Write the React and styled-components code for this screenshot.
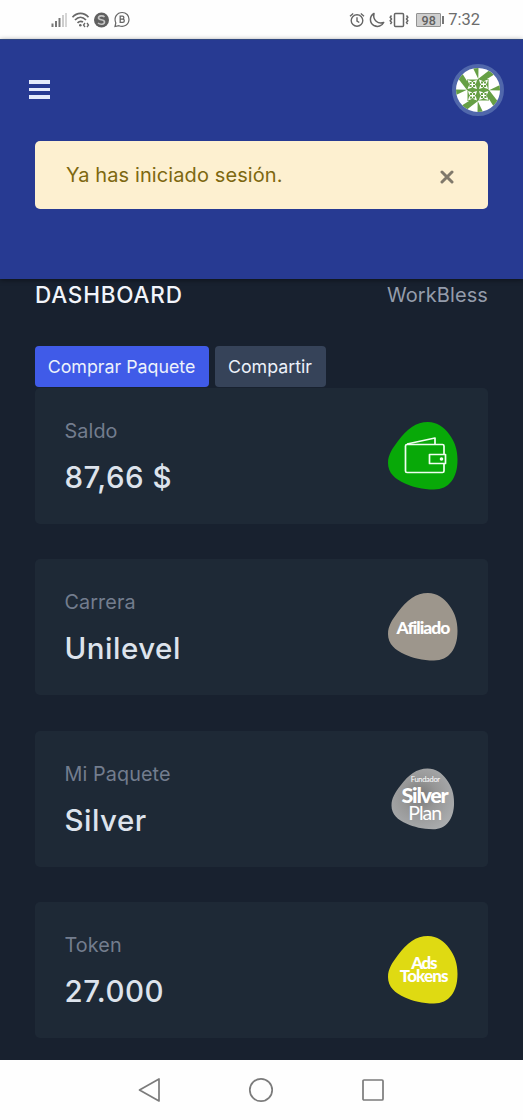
import React from "react";
import styled, { createGlobalStyle } from "styled-components";

const GlobalStyle = createGlobalStyle`
  * {
    box-sizing: border-box;
  }
  body {
    margin: 0;
    background-color: #18212f;
    font-family: Inter, "Liberation Sans", sans-serif;
  }
`;

const Screen = styled.div`
  display: flex;
  flex-direction: column;
  width: 523px;
  height: 1120px;
  overflow: hidden;
  background-color: #18212f;
`;

const StatusBar = styled.div`
  display: flex;
  flex-shrink: 0;
  justify-content: space-between;
  align-items: center;
  height: 39px;
  padding: 0 43px 0 50px;
  background-color: #fefefe;
`;

const StatusGroup = styled.div`
  display: flex;
  align-items: center;
  gap: ${props => props.gap};
`;

const Clock = styled.span`
  font-family: Roboto, sans-serif;
  font-size: 16.5px;
  line-height: 20px;
  color: #6c6c6c;
`;

const Battery = styled.span`
  display: flex;
  align-items: center;
  gap: 1px;
  margin-left: 3px;
  &::after {
    content: "";
    width: 2px;
    height: 8px;
    background-color: #777;
  }
`;

const BatteryLevel = styled.span`
  width: 25px;
  height: 14px;
  border: 1px solid #929292;
  border-radius: 1px;
  background-color: #cfcfcf;
  font-family: Roboto, sans-serif;
  font-size: 12.5px;
  font-weight: 500;
  line-height: 13px;
  text-align: center;
  color: #606060;
`;

const Header = styled.header`
  flex-shrink: 0;
  height: 240px;
  background-color: #273a92;
  border-top: 1px solid #2f477f;
  box-shadow: 0 1px 5px rgba(0, 0, 0, 0.45);
`;

const TopBar = styled.div`
  display: flex;
  justify-content: space-between;
  align-items: center;
  height: 101px;
  padding: 0 19px 2px 29px;
`;

const MenuButton = styled.button`
  display: flex;
  flex-direction: column;
  gap: 4px;
  width: 21px;
  padding: 0;
  border: none;
  background: none;
`;

const MenuLine = styled.span`
  height: 3.5px;
  background-color: #e4eafb;
`;

const Avatar = styled.div`
  width: 52px;
  height: 52px;
  border: 4px solid #5067ab;
  border-radius: 50%;
  overflow: hidden;
  background-color: #fff;
`;

const Alert = styled.div`
  display: flex;
  justify-content: space-between;
  align-items: center;
  height: 68px;
  margin: 0 35px;
  padding: 0 34px 0 31px;
  border-radius: 5px;
  background-color: #fdf0d0;
`;

const AlertText = styled.span`
  font-size: 20px;
  letter-spacing: 0.1px;
  color: #7d6810;
`;

const CloseIcon = styled.svg`
  margin-top: 4px;
`;

const Main = styled.main`
  flex: 1;
  min-height: 0;
  padding: 0 35px;
`;

const TitleRow = styled.div`
  display: flex;
  justify-content: space-between;
  align-items: center;
  height: 32px;
  margin-bottom: 35px;
`;

const Title = styled.h1`
  margin: 0;
  font-size: 22.5px;
  font-weight: 550;
  line-height: 30px;
  letter-spacing: 0.8px;
  color: #f2f5fb;
`;

const Brand = styled.span`
  font-size: 20px;
  letter-spacing: 0.1px;
  color: #949cab;
`;

const Actions = styled.div`
  display: flex;
  gap: 6px;
  margin-bottom: 1px;
`;

const Button = styled.button`
  width: ${props => props.width};
  height: 41px;
  padding: 0 1px 1px 0;
  border: none;
  border-radius: 4px;
  background-color: ${props => (props.$primary ? "#405be8" : "#364359")};
  font-family: inherit;
  font-size: 17.8px;
  color: #edf2fb;
`;

const Cards = styled.div`
  display: flex;
  flex-direction: column;
  gap: 35.4px;
`;

const Card = styled.section`
  display: flex;
  justify-content: space-between;
  align-items: center;
  height: 136px;
  padding: 0 30px 0 29.5px;
  border-radius: 5px;
  background-color: #1e2936;
`;

const Label = styled.p`
  margin: 0 0 14px;
  font-size: 19.8px;
  line-height: 28px;
  letter-spacing: 0.1px;
  color: #737d8e;
`;

const Value = styled.p`
  margin: 0;
  font-size: 29.5px;
  font-weight: 500;
  line-height: 36px;
  letter-spacing: 0.5px;
  color: #dde3ec;
`;

const Navigation = styled.nav`
  display: flex;
  flex-shrink: 0;
  justify-content: center;
  align-items: center;
  gap: 87px;
  height: 60px;
  padding-right: 1px;
  background-color: #fefefe;
`;

const BLOB =
  "M40 0C49 0 56 5 61 12C67 20 69.5 28 69.5 38C69.5 56 61 67.5 46 67.5C34 67.5 25 65 17 61.5C7 57 0 51 0 41C0 33 4 27 10 19C19 7 28 0 40 0Z";

const StatusIcons = () => (
  <StatusGroup gap="3px">
    <svg width="18" height="16" viewBox="0 0 18 16">
      <g fill="#777">
        <rect x="1.5" y="11.5" width="2" height="3.5" />
        <rect x="5" y="9" width="2" height="6" />
        <rect x="8.5" y="6" width="2" height="9" />
      </g>
      <g fill="#ccc">
        <rect x="12" y="3" width="2" height="12" />
        <rect x="15.2" y="1" width="1.6" height="14" />
      </g>
    </svg>
    <svg width="19" height="17" viewBox="0 0 19 17" fill="none" stroke="#686868">
      <path d="M1.5 6.2C6 1 13 1 17.5 6.2M4 9C7.5 5.3 11.5 5.3 15 9M6.5 11.8C8.7 9.8 10 9.8 12 11" strokeWidth="1.7" />
      <circle cx="9.3" cy="14.2" r="1.3" fill="#686868" stroke="none" />
      <path d="m14 12-1.5 2L14 16m2-4 1.5 2L16 16" strokeWidth="1.3" />
    </svg>
    <svg width="17" height="16" viewBox="0 0 17 16">
      <circle cx="8.5" cy="8" r="7.5" fill="#606060" />
      <path d="M11.5 5C10 3.2 5.5 3.5 5.5 6C5.5 8.6 11.5 7 11.5 10C11.5 12.5 7 13 5 11" fill="none" stroke="#c4c4c4" strokeWidth="1.6" />
    </svg>
    <svg width="18" height="17" viewBox="0 0 18 17" fill="none" stroke="#666">
      <path d="M2 15.5 2.8 12C.5 6.5 4 1.5 9.2 1.5C13.3 1.5 16 4.5 16 8.3C16 13.8 11 16.5 6 14.7Z" strokeWidth="1.2" />
      <path d="M7.2 5.2H9.5C11.3 5.2 11.3 8.1 9.5 8.1H7.2H9.8C11.8 8.1 11.8 11.3 9.8 11.3H7.2Z" strokeWidth="1.3" />
    </svg>
  </StatusGroup>
);

const SystemIcons = () => (
  <StatusGroup gap="4px">
    <svg width="16" height="16" viewBox="0 0 16 16" fill="none" stroke="#656565" strokeWidth="1.4">
      <circle cx="8" cy="8.5" r="5.8" />
      <path d="M8 5.3V9L10.3 10.5M1 4.2 4.2 1.5M15 4.2 11.8 1.5" />
    </svg>
    <svg width="16" height="16" viewBox="0 0 16 16" fill="none" stroke="#656565" strokeWidth="1.5">
      <path d="M5 1.5C0 4.5.5 11 5 13.5C8.8 15.5 13 14 14.7 10.5C9 12.5 3.5 8 5 1.5Z" strokeLinejoin="round" />
    </svg>
    <svg width="20" height="16" viewBox="0 0 20 16" fill="none" stroke="#656565" strokeWidth="1.5">
      <rect x="5.5" y="1.5" width="9" height="13" rx="1" />
      <path d="M2.5 3.5 1.2 5.2 2.5 7 1.2 8.8 2.5 10.6 1.4 12.2M17.5 3.5 18.8 5.2 17.5 7 18.8 8.8 17.5 10.6 18.6 12.2" strokeWidth="1.5" />
    </svg>
    <Battery>
      <BatteryLevel>98</BatteryLevel>
    </Battery>
    <Clock>7:32</Clock>
  </StatusGroup>
);

const Identicon = () => (
  <svg width="44" height="44" viewBox="-22 -22 44 44" fill="#669f45">
    {[0, 90, 180, 270].map(angle => (
      <g key={angle} transform={`rotate(${angle})`}>
        <path d="M-5-22H.5L.3-11Z" />
        <path d="M0-11 11-19.5 17-16 9-11Z" />
        <rect x="0" y="-11" width="10.5" height="11" />
        <path
          fill="#fff"
          d="M1-10.5 4.2-9.2 5.5-8 6.8-9.2 10-10.5 9-7 7.8-5.5 9-4.2 10-1 6.8-2 5.5-3.2 4.2-2 1-1 2-4.2 3.2-5.5 2-7Z"
        />
        <path d="M3-8.5h2.1v2.1h-2.1zM6-8.5h2.1v2.1h-2.1zM3-5h2.1v2.1h-2.1zM6-5h2.1v2.1h-2.1z" />
      </g>
    ))}
  </svg>
);

const WalletBadge = () => (
  <svg width="70" height="68" viewBox="0 0 70 68">
    <path d={BLOB} fill="#08a908" />
    <g fill="none" stroke="#effff0" strokeWidth="1.7" strokeLinejoin="round">
      <rect x="17.5" y="22.5" width="38.5" height="28" rx="1.5" />
      <path d="M19 22 47 16V22" />
      <rect x="41.5" y="32.5" width="16" height="9" fill="#08a908" />
    </g>
    <circle cx="53.5" cy="37" r="1.8" fill="#effff0" />
  </svg>
);

const BadgeLine = styled.text`
  font-family: Lato, sans-serif;
  font-size: ${props => props.$size}px;
  font-weight: ${props => props.$weight || 900};
  font-variant-ligatures: none;
  letter-spacing: ${props => props.$spacing || "-0.5px"};
  text-anchor: middle;
  fill: #fff;
`;

const AffiliateBadge = () => (
  <svg width="70" height="68" viewBox="0 0 70 68">
    <path d={BLOB} fill="#9d968c" />
    <BadgeLine x="35" y="40.5" $size="17.5" $spacing="-1px">
      Afiliado
    </BadgeLine>
  </svg>
);

const SilverBadge = () => (
  <svg width="70" height="68" viewBox="0 0 70 68">
    <defs>
      <radialGradient id="silver" cx="45%" cy="45%" r="60%">
        <stop offset="0" stopColor="#777" />
        <stop offset="0.45" stopColor="#969696" />
        <stop offset="1" stopColor="#a9abad" />
      </radialGradient>
    </defs>
    <path d={BLOB} fill="url(#silver)" transform="translate(3.5 3.5) scale(.9)" />
    <BadgeLine x="37.3" y="16.5" $size="7.5" $weight="400" $spacing="-0.3px">
      Fundador
    </BadgeLine>
    <BadgeLine x="36.5" y="38" $size="21.5" $spacing="-1.3px">
      Silver
    </BadgeLine>
    <BadgeLine x="36.7" y="55" $size="19.5" $weight="400" $spacing="-1px">
      Plan
    </BadgeLine>
  </svg>
);

const TokenBadge = () => (
  <svg width="70" height="68" viewBox="0 0 70 68">
    <path d={BLOB} fill="#dfda12" />
    <BadgeLine x="35.7" y="32.5" $size="17" $spacing="-1.3px">
      Ads
    </BadgeLine>
    <BadgeLine x="35.7" y="45.5" $size="17" $spacing="-0.9px">
      Tokens
    </BadgeLine>
  </svg>
);

const cards = [
  { label: "Saldo", value: "87,66 $", badge: <WalletBadge /> },
  { label: "Carrera", value: "Unilevel", badge: <AffiliateBadge /> },
  { label: "Mi Paquete", value: "Silver", badge: <SilverBadge /> },
  { label: "Token", value: "27.000", badge: <TokenBadge /> },
];

const App = () => {
  return (
    <>
      <GlobalStyle />
      <Screen>
        <StatusBar>
          <StatusIcons />
          <SystemIcons />
        </StatusBar>
        <Header>
          <TopBar>
            <MenuButton aria-label="Menu">
              <MenuLine />
              <MenuLine />
              <MenuLine />
            </MenuButton>
            <Avatar>
              <Identicon />
            </Avatar>
          </TopBar>
          <Alert>
            <AlertText>Ya has iniciado sesión.</AlertText>
            <CloseIcon width="14" height="14" viewBox="0 0 14 14">
              <path d="M2 2 12 12M12 2 2 12" stroke="#80796b" strokeWidth="3" strokeLinecap="round" />
            </CloseIcon>
          </Alert>
        </Header>
        <Main>
          <TitleRow>
            <Title>DASHBOARD</Title>
            <Brand>WorkBless</Brand>
          </TitleRow>
          <Actions>
            <Button $primary width="174px">
              Comprar Paquete
            </Button>
            <Button width="111px">Compartir</Button>
          </Actions>
          <Cards>
            {cards.map(card => (
              <Card key={card.label}>
                <div>
                  <Label>{card.label}</Label>
                  <Value>{card.value}</Value>
                </div>
                {card.badge}
              </Card>
            ))}
          </Cards>
        </Main>
        <Navigation>
          <svg width="24" height="26" viewBox="0 0 24 26" fill="none" stroke="#7b7b7b" strokeWidth="1.7">
            <path d="M22 2V24L2.5 13Z" strokeLinejoin="round" />
          </svg>
          <svg width="26" height="26" viewBox="0 0 26 26" fill="none" stroke="#7b7b7b" strokeWidth="1.7">
            <circle cx="13" cy="13" r="11.2" />
          </svg>
          <svg width="24" height="24" viewBox="0 0 24 24" fill="none" stroke="#7b7b7b" strokeWidth="1.7">
            <rect x="2" y="2" width="20" height="20" rx="1" />
          </svg>
        </Navigation>
      </Screen>
    </>
  );
};

export default App;
